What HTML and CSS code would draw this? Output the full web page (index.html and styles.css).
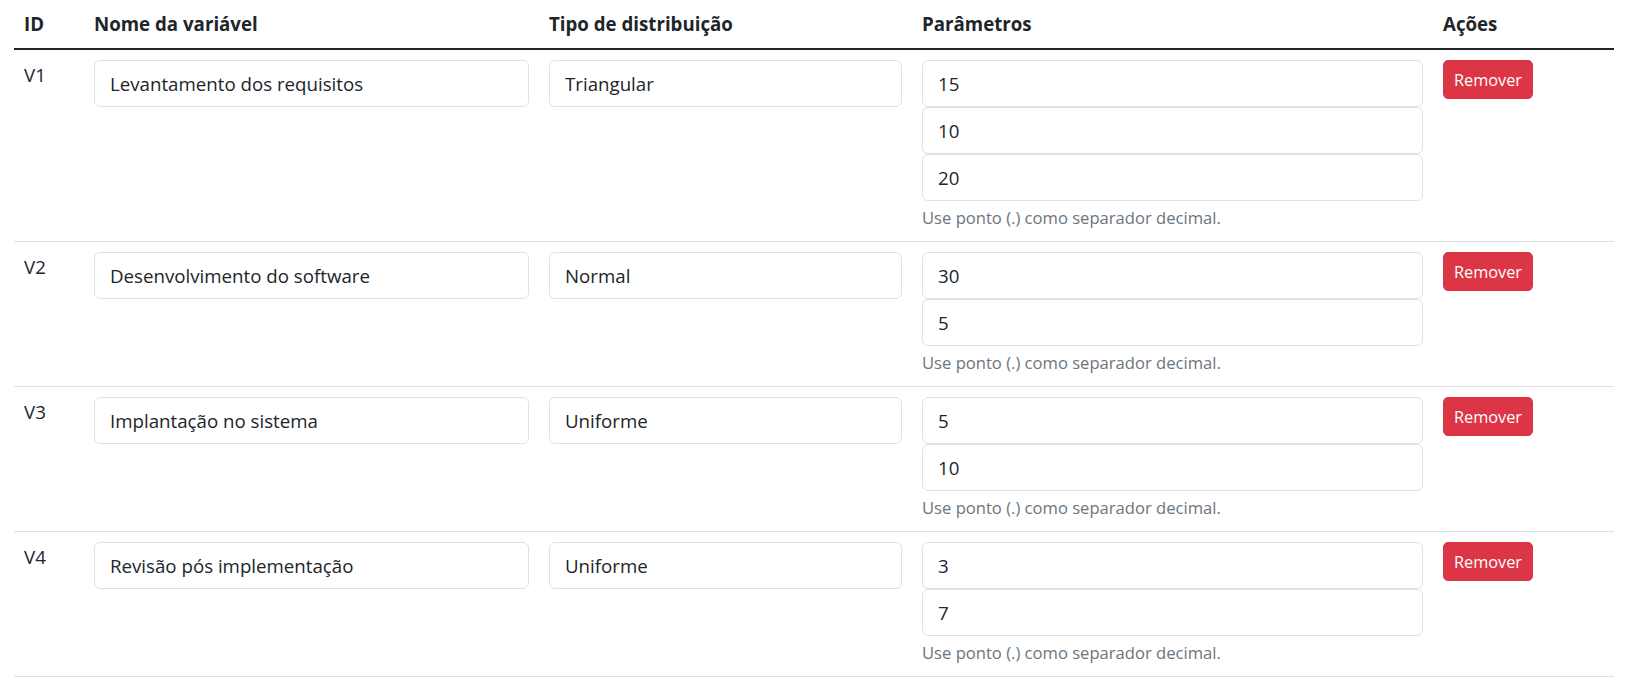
FILE: index.html
```html
<!DOCTYPE html>
<html lang="pt-BR">
<head>
<meta charset="utf-8">
<title>Variáveis</title>
<link rel="stylesheet" href="styles.css">
</head>
<body>
<div class="wrap">
<table class="vars">
  <colgroup>
    <col class="c-id"><col class="c-name"><col class="c-dist"><col class="c-par"><col class="c-act">
  </colgroup>
  <thead>
    <tr><th>ID</th><th>Nome da variável</th><th>Tipo de distribuição</th><th>Parâmetros</th><th>Ações</th></tr>
  </thead>
  <tbody>
    <tr>
      <td class="id">V1</td>
      <td><input class="field" type="text" value="Levantamento dos requisitos"></td>
      <td><input class="field" type="text" value="Triangular"></td>
      <td>
        <input class="field" type="text" value="15">
        <input class="field" type="text" value="10">
        <input class="field" type="text" value="20">
        <div class="help">Use ponto (.) como separador decimal.</div>
      </td>
      <td><button class="btn-remove" type="button">Remover</button></td>
    </tr>
    <tr>
      <td class="id">V2</td>
      <td><input class="field" type="text" value="Desenvolvimento do software"></td>
      <td><input class="field" type="text" value="Normal"></td>
      <td>
        <input class="field" type="text" value="30">
        <input class="field" type="text" value="5">
        <div class="help">Use ponto (.) como separador decimal.</div>
      </td>
      <td><button class="btn-remove" type="button">Remover</button></td>
    </tr>
    <tr>
      <td class="id">V3</td>
      <td><input class="field" type="text" value="Implantação no sistema"></td>
      <td><input class="field" type="text" value="Uniforme"></td>
      <td>
        <input class="field" type="text" value="5">
        <input class="field" type="text" value="10">
        <div class="help">Use ponto (.) como separador decimal.</div>
      </td>
      <td><button class="btn-remove" type="button">Remover</button></td>
    </tr>
    <tr>
      <td class="id">V4</td>
      <td><input class="field" type="text" value="Revisão pós implementação"></td>
      <td><input class="field" type="text" value="Uniforme"></td>
      <td>
        <input class="field" type="text" value="3">
        <input class="field" type="text" value="7">
        <div class="help">Use ponto (.) como separador decimal.</div>
      </td>
      <td><button class="btn-remove" type="button">Remover</button></td>
    </tr>
  </tbody>
</table>
</div>
</body>
</html>
```

FILE: styles.css
```css
html, body {
  margin: 0;
  padding: 0;
  background: #fff;
}

body {
  font-family: "Open Sans", "Noto Sans", sans-serif;
  font-size: 18.7px;
  color: #212529;
}

.wrap {
  padding: 0 13px 0 14px;
}

.vars {
  width: 100%;
  border-collapse: collapse;
  table-layout: fixed;
}

.c-id { width: 70px; }
.c-name { width: 455px; }
.c-dist { width: 373px; }
.c-par { width: 521px; }
.c-act { width: 181px; }

.vars th {
  text-align: left;
  font-weight: 700;
  line-height: 30px;
  padding: 9px 10px;
  border-bottom: 2px solid #212529;
}

.vars td {
  vertical-align: top;
  padding: 10px;
  line-height: 30px;
  border-bottom: 1px solid #dee2e6;
}

.field {
  display: block;
  box-sizing: border-box;
  width: 100%;
  height: 47px;
  margin: 0;
  padding: 0 15px;
  font-family: inherit;
  font-size: 18.7px;
  color: #212529;
  background: #fff;
  border: 1px solid #dee2e6;
  border-radius: 6px;
  outline: none;
}

.help {
  margin-top: 4px;
  font-size: 16.6px;
  line-height: 26px;
  color: #6c757d;
}

.btn-remove {
  display: block;
  height: 39px;
  padding: 0 10px;
  font-family: inherit;
  font-size: 16.3px;
  color: #fff;
  background: #dc3545;
  border: 1px solid #dc3545;
  border-radius: 5px;
  cursor: pointer;
}
```
